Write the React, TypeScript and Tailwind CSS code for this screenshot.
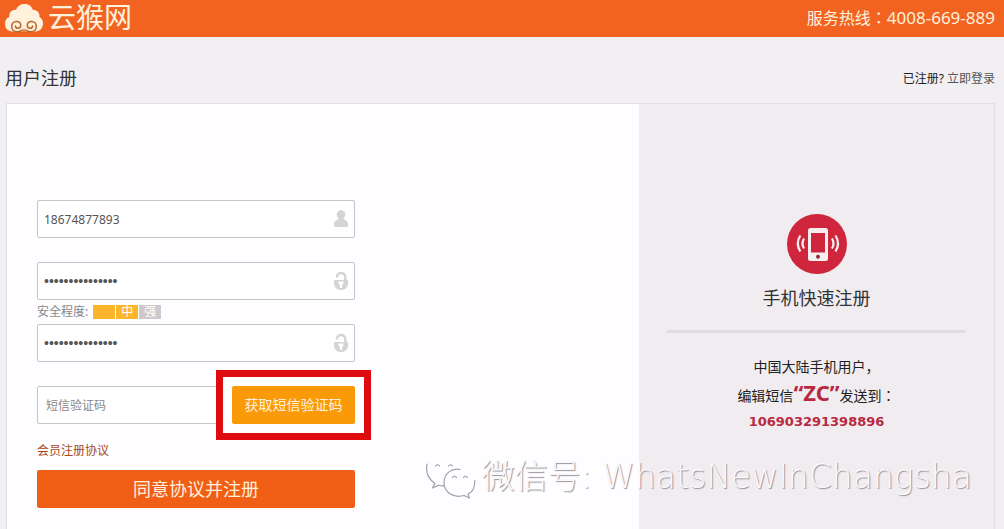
import React from 'react'

function CloudLogo() {
    return (
        <svg className="w-10 h-8 shrink-0" viewBox="0 0 40 32" fill="none" aria-hidden="true">
            <path d="M9 28.500C4 28.500 1 25.500 1 21c0-3.500 1.500-6 4.300-7C4.800 9.500 8 6.300 12 6.800 13.500 3 16.500 1 20.500 1c4.500 0 7.300 2.300 8.300 5.800C33 6.800 36 9.800 35.500 14c2.500 1.300 3.500 3.600 3.500 6.500 0 5-3.500 8-8 8Z" fill="#fff1dc" />
            <path d="M21.800 27c1.200 1.200 2.800 1.700 4.800 1.700 3.600 0 5.700-2.500 5.700-5.300 0-2.900-2.100-5-4.900-5-2.500 0-4.100 1.700-4.100 3.800 0 1.900 1.300 3.100 2.900 3.100 1.500 0 2.500-1 2.300-2.300M18.200 27c-1.200 1.200-2.800 1.700-4.800 1.700-3.600 0-5.700-2.500-5.700-5.300 0-2.900 2.100-5 4.900-5 2.500 0 4.100 1.700 4.100 3.800 0 1.900-1.300 3.100-2.900 3.100-1.500 0-2.500-1-2.300-2.300" stroke="#b5672e" strokeWidth="1.500" strokeLinecap="round" />
            <path d="M18.500 29c.8-1 1-2 1-3.500h1c0 1.500.2 2.500 1 3.500Z" fill="#f26322" />
        </svg>
    )
}

function UserIcon() {
    return (
        <svg className="w-4 h-5" viewBox="0 0 16 20" fill="#d5d3d6" aria-hidden="true">
            <circle cx="8" cy="5.500" r="4.300" />
            <path d="M5.500 8.500h5l.5 2c2.500.5 4 2.500 4 5V17q0 1-1 1H2q-1 0-1-1v-1.500c0-2.500 1.500-4.500 4-5Z" />
        </svg>
    )
}

function LockIcon() {
    return (
        <svg className="w-4 h-5" viewBox="0 0 16 20" fill="none" aria-hidden="true">
            <path d="M4 6.500C4 3.500 5.500 2 8 2s4.300 1.700 4.300 4.500V10" stroke="#d5d3d6" strokeWidth="2.400" />
            <path d="M1 9h14v3.500c0 4-3 6.500-7 6.500s-7-2.500-7-6.500Z" fill="#d5d3d6" />
            <path d="M5.500 10.500h5v2L9 14v3H7v-3l-1.500-1.500Z" fill="#fff" />
        </svg>
    )
}

function PhoneIcon() {
    return (
        <svg className="w-15 h-15" viewBox="0 0 60 60" fill="none" aria-hidden="true">
            <circle cx="30" cy="30" r="30" fill="#d0263d" />
            <rect x="21" y="14" width="20" height="33" rx="2.500" fill="#f7eef0" />
            <rect x="24" y="19" width="14" height="19.500" fill="#d0263d" />
            <circle cx="31" cy="42.800" r="2" fill="#8c2a3a" />
            <path d="M17 24.500q-3 5 0 10M13.300 21.500q-5 8 0 16M45 24.500q3 5 0 10M48.500 21.500q5 8 0 16" stroke="#f7eef0" strokeWidth="2.200" />
        </svg>
    )
}

function WechatIcon() {
    return (
        <svg className="w-13 h-10" viewBox="0 0 52 40" fill="none" aria-hidden="true">
            <g stroke="#a3a1a5" strokeWidth="1.200" strokeLinecap="round" strokeLinejoin="round">
                <path d="M1 3c-1.500 8 1.500 15 8 19.500L6.500 27l6-2.800c2 .6 4 .8 6 .5" />
                <path d="M34 8.500c-8-2-16 4-16 13C18 31 27 37.500 38 34.500l5.500 2.500-1.500-3.800c3.500-2 6-5.500 6.500-9.500l.3-4" />
                <path d="M9.500 5q2-2.500 4 0M22.500 5q2-2.500 4 0M26.500 16.500q2-2.500 4 0M37.500 16.500q2-2.500 4 0" />
            </g>
        </svg>
    )
}

const inputClass = "w-full h-[38px] border border-[#c4c2c6] rounded-xs bg-white pl-1.5 pr-9 text-[#555] outline-none"
const textClass = `${inputClass} text-xs`
const passwordClass = `${inputClass} text-sm font-['Liberation_Sans',sans-serif]`

function App() {
    return (
        <div className="relative min-h-screen flex flex-col bg-[#f2eff3] text-[#333] font-['Noto_Sans','Noto_Sans_CJK_SC',sans-serif]">
            <header className="flex items-center justify-between h-[37px] pl-1 pr-[9px] bg-[#f26322] text-[#fff1dc]">
                <a href="/" className="flex items-center gap-1">
                    <CloudLogo />
                    <span className="text-[28px] leading-8 font-['Liberation_Sans','Noto_Sans_CJK_SC',sans-serif]">云猴网</span>
                </a>
                <p className="text-base leading-5 pb-0.5">
                    服务热线<span className="font-['Noto_Sans_CJK_TC',sans-serif]">：</span><span className="text-[17px]">4008-669-889</span>
                </p>
            </header>

            <div className="flex items-center justify-between h-[66px] pl-[5px] pr-[9px] pt-4">
                <h1 className="text-lg">用户注册</h1>
                <p className="text-xs text-[#222] pt-0.5">已注册? <a href="/login" className="text-[#555]">立即登录</a></p>
            </div>

            <main className="grow flex ml-1.5 mr-[9px] border border-b-0 border-[#e2dfe3]">
                <form className="grow bg-[#fefdff] pl-[30px] pt-24 pb-5">
                    <div className="w-[318px]">
                        <div className="relative mb-6">
                            <input type="text" aria-label="手机号码" defaultValue="18674877893" className={textClass} />
                            <span className="absolute right-1.5 top-[9px]"><UserIcon /></span>
                        </div>
                        <div className="relative">
                            <input type="password" aria-label="密码" defaultValue="abcdefgh1234567" className={passwordClass} />
                            <span className="absolute right-1.5 top-[9px]"><LockIcon /></span>
                        </div>
                        <div className="flex items-center h-6 gap-px text-xs text-[#888]">
                            <span className="mr-1 leading-6">安全程度:</span>
                            <span className="w-[22px] h-3.5 bg-[#fdb52b]"></span>
                            <span className="w-[22px] h-3.5 leading-3.5 text-center text-white bg-[#fdb52b]">中</span>
                            <span className="w-[22px] h-3.5 leading-3.5 text-center text-white bg-[#cccacd]">强</span>
                        </div>
                        <div className="relative mb-6">
                            <input type="password" aria-label="确认密码" defaultValue="abcdefgh1234567" className={passwordClass} />
                            <span className="absolute right-1.5 top-[9px]"><LockIcon /></span>
                        </div>
                        <div className="flex justify-between">
                            <input type="text" aria-label="短信验证码" placeholder="短信验证码" className="w-[182px] h-[38px] border border-[#c4c2c6] rounded-xs bg-white pl-2 text-xs placeholder:text-[#888] outline-none" />
                            <div className="relative">
                                <button type="button" className="w-[123px] h-[38px] rounded-xs bg-[#fb9a08] text-sm text-[#fff1dc]">获取短信验证码</button>
                                <div className="absolute -inset-4 border-7 border-[#e00b0f] pointer-events-none"></div>
                            </div>
                        </div>
                        <a href="/agreement" className="block mt-4 mb-2 text-xs leading-5.5 text-[#a8481c]">会员注册协议</a>
                        <button type="submit" className="w-full h-[38px] rounded-xs bg-[#f15f16] text-lg text-[#fff1dc]">同意协议并注册</button>
                    </div>
                </form>

                <aside className="w-[355px] shrink-0 flex flex-col items-center bg-[#f0ecf0] px-7 pt-[110px]">
                    <PhoneIcon />
                    <h2 className="text-lg leading-6 mt-3">手机快速注册</h2>
                    <hr className="w-full mt-5 border-t-3 border-[#dfdde2]" />
                    <p className="mt-5 text-sm leading-7 text-center text-[#222]">
                        中国大陆手机用户，<br />
                        编辑短信<strong className="text-[22px] leading-5 text-[#b8293f]">“ZC”</strong>发送到<span className="font-['Noto_Sans_CJK_TC',sans-serif]">：</span>
                    </p>
                    <strong className="text-[13px] leading-6 text-[#b8293f] font-['DejaVu_Sans',sans-serif]">106903291398896</strong>
                </aside>
            </main>

            {/* watermark */}
            <div className="absolute right-8 bottom-5 flex items-center gap-1 whitespace-nowrap pointer-events-none">
                <WechatIcon />
                <p className="text-[33px] leading-12 pb-2 font-extralight text-[#fbf9fc] [text-shadow:1px_1px_1px_#969298] font-['DejaVu_Sans','Noto_Sans_CJK_SC',sans-serif]">微信号: WhatsNewInChangsha</p>
            </div>
        </div>
    )
}

export default App
